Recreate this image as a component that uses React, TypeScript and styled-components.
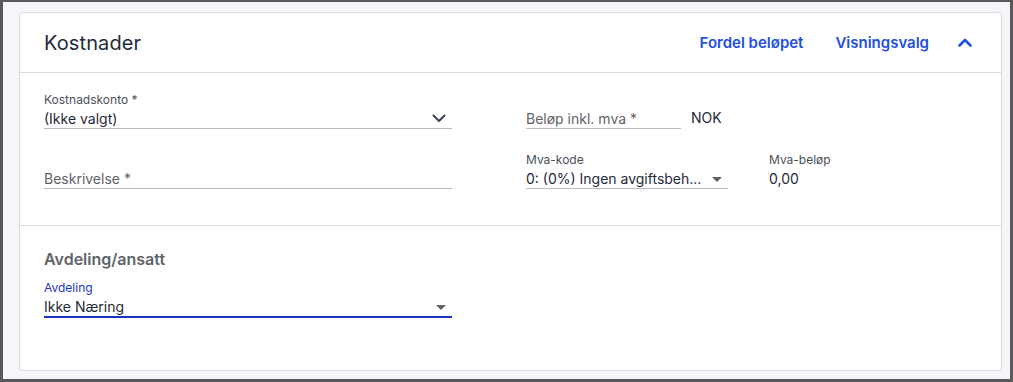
import React from "react";
import styled, { createGlobalStyle } from "styled-components";

const Global = createGlobalStyle`
  html, body { margin: 0; padding: 0; }
  body { font-family: Inter, "Noto Sans", sans-serif; -webkit-font-smoothing: antialiased; }
  * { box-sizing: border-box; }
`;

const Frame = styled.div`
  width: 1013px;
  height: 382px;
  border-style: solid;
  border-color: #58595b;
  border-width: 2px 3px 3px 3px;
  background: #f5f6fa;
  padding: 10px 8px 8px 16px;
`;

const Card = styled.section`
  height: 100%;
  background: #fff;
  border: 1px solid #d9dbe0;
  border-radius: 4px;
  display: flex;
  flex-direction: column;
`;

const Header = styled.header`
  height: 60px;
  display: flex;
  align-items: center;
  padding: 0 29px 0 24px;
  border-bottom: 1px solid #dadce0;
`;

const Title = styled.h2`
  margin: 0;
  flex: 1;
  font-size: 20px;
  font-weight: 400;
  color: #222b3a;
  letter-spacing: 0.1px;
`;

const Actions = styled.div`
  display: flex;
  align-items: center;
  gap: 32px;
`;

const LinkButton = styled.button`
  background: none;
  border: 0;
  padding: 0;
  font-family: inherit;
  font-size: 15px;
  font-weight: 600;
  color: #1f4fe0;
  cursor: pointer;
`;

const IconButton = styled.button`
  background: none;
  border: 0;
  padding: 0;
  margin-left: -3px;
  display: flex;
  align-items: center;
`;

const Section = styled.div<{ $pt: number; $pb: number; $divider?: boolean }>`
  padding: ${(p) => p.$pt}px 24px ${(p) => p.$pb}px 24px;
  border-bottom: ${(p) => (p.$divider ? "1px solid #dadce0" : "none")};
`;

const Grid = styled.div`
  display: grid;
  grid-template-columns: 408px 1fr;
  column-gap: 74px;
  row-gap: 23px;
`;

const Row = styled.div`
  display: flex;
  align-items: flex-start;
`;

const Field = styled.div<{ $w: number; $active?: boolean }>`
  width: ${(p) => p.$w}px;
  display: flex;
  flex-direction: column;
  border-bottom: ${(p) => (p.$active ? "2px solid #1a34c4" : "1px solid #b9bcc2")};
`;

const Label = styled.div<{ $active?: boolean }>`
  height: 16px;
  line-height: 16px;
  font-size: 12px;
  color: ${(p) => (p.$active ? "#1a34c4" : "#4b5058")};
`;

const ValueRow = styled.div`
  height: 20px;
  display: flex;
  align-items: center;
  justify-content: space-between;
  padding-right: 6px;
`;

const Value = styled.span<{ $placeholder?: boolean }>`
  font-size: 14px;
  color: ${(p) => (p.$placeholder ? "#5f6368" : "#1f2937")};
  white-space: nowrap;
  overflow: hidden;
  text-overflow: ellipsis;
`;

const Suffix = styled.div`
  margin-left: 10px;
  padding-top: 16px;
  height: 36px;
  line-height: 20px;
  font-size: 14px;
  color: #1f2937;
`;

const Static = styled.div`
  margin-left: 41px;
  display: flex;
  flex-direction: column;
`;

const SubHeading = styled.h3`
  margin: 0 0 11px 0;
  height: 20px;
  line-height: 20px;
  font-size: 16px;
  font-weight: 600;
  color: #5f6368;
`;

const Triangle = styled.span`
  width: 0;
  height: 0;
  border-left: 5px solid transparent;
  border-right: 5px solid transparent;
  border-top: 5px solid #5f6368;
  margin-top: 2px;
`;

const ChevronDown = () => (
  <svg width="14" height="9" viewBox="0 0 14 9" fill="none">
    <path d="M1.5 1.5 L7 7 L12.5 1.5" stroke="#3b4252" strokeWidth="2" strokeLinecap="round" strokeLinejoin="round" />
  </svg>
);

const ChevronUp = () => (
  <svg width="14" height="9" viewBox="0 0 14 9" fill="none">
    <path d="M1.5 7.5 L7 2 L12.5 7.5" stroke="#1f4fe0" strokeWidth="2.6" strokeLinecap="round" strokeLinejoin="round" />
  </svg>
);

export default function App() {
  return (
    <>
      <Global />
      <Frame>
        <Card>
          <Header>
            <Title>Kostnader</Title>
            <Actions>
              <LinkButton>Fordel beløpet</LinkButton>
              <LinkButton>Visningsvalg</LinkButton>
              <IconButton aria-label="Skjul">
                <ChevronUp />
              </IconButton>
            </Actions>
          </Header>

          <Section $pt={19} $pb={36} $divider>
            <Grid>
              <Field $w={408}>
                <Label>Kostnadskonto *</Label>
                <ValueRow>
                  <Value>(Ikke valgt)</Value>
                  <ChevronDown />
                </ValueRow>
              </Field>
              <Row>
                <Field $w={155}>
                  <Label />
                  <ValueRow>
                    <Value $placeholder>Beløp inkl. mva *</Value>
                  </ValueRow>
                </Field>
                <Suffix>NOK</Suffix>
              </Row>

              <Field $w={408}>
                <Label />
                <ValueRow>
                  <Value $placeholder>Beskrivelse *</Value>
                </ValueRow>
              </Field>
              <Row>
                <Field $w={202}>
                  <Label>Mva-kode</Label>
                  <ValueRow>
                    <Value>0: (0%) Ingen avgiftsbeh...</Value>
                    <Triangle />
                  </ValueRow>
                </Field>
                <Static>
                  <Label>Mva-beløp</Label>
                  <ValueRow>
                    <Value>0,00</Value>
                  </ValueRow>
                </Static>
              </Row>
            </Grid>
          </Section>

          <Section $pt={23} $pb={0}>
            <SubHeading>Avdeling/ansatt</SubHeading>
            <Field $w={408} $active>
              <Label $active>Avdeling</Label>
              <ValueRow>
                <Value>Ikke Næring</Value>
                <Triangle />
              </ValueRow>
            </Field>
          </Section>
        </Card>
      </Frame>
    </>
  );
}
